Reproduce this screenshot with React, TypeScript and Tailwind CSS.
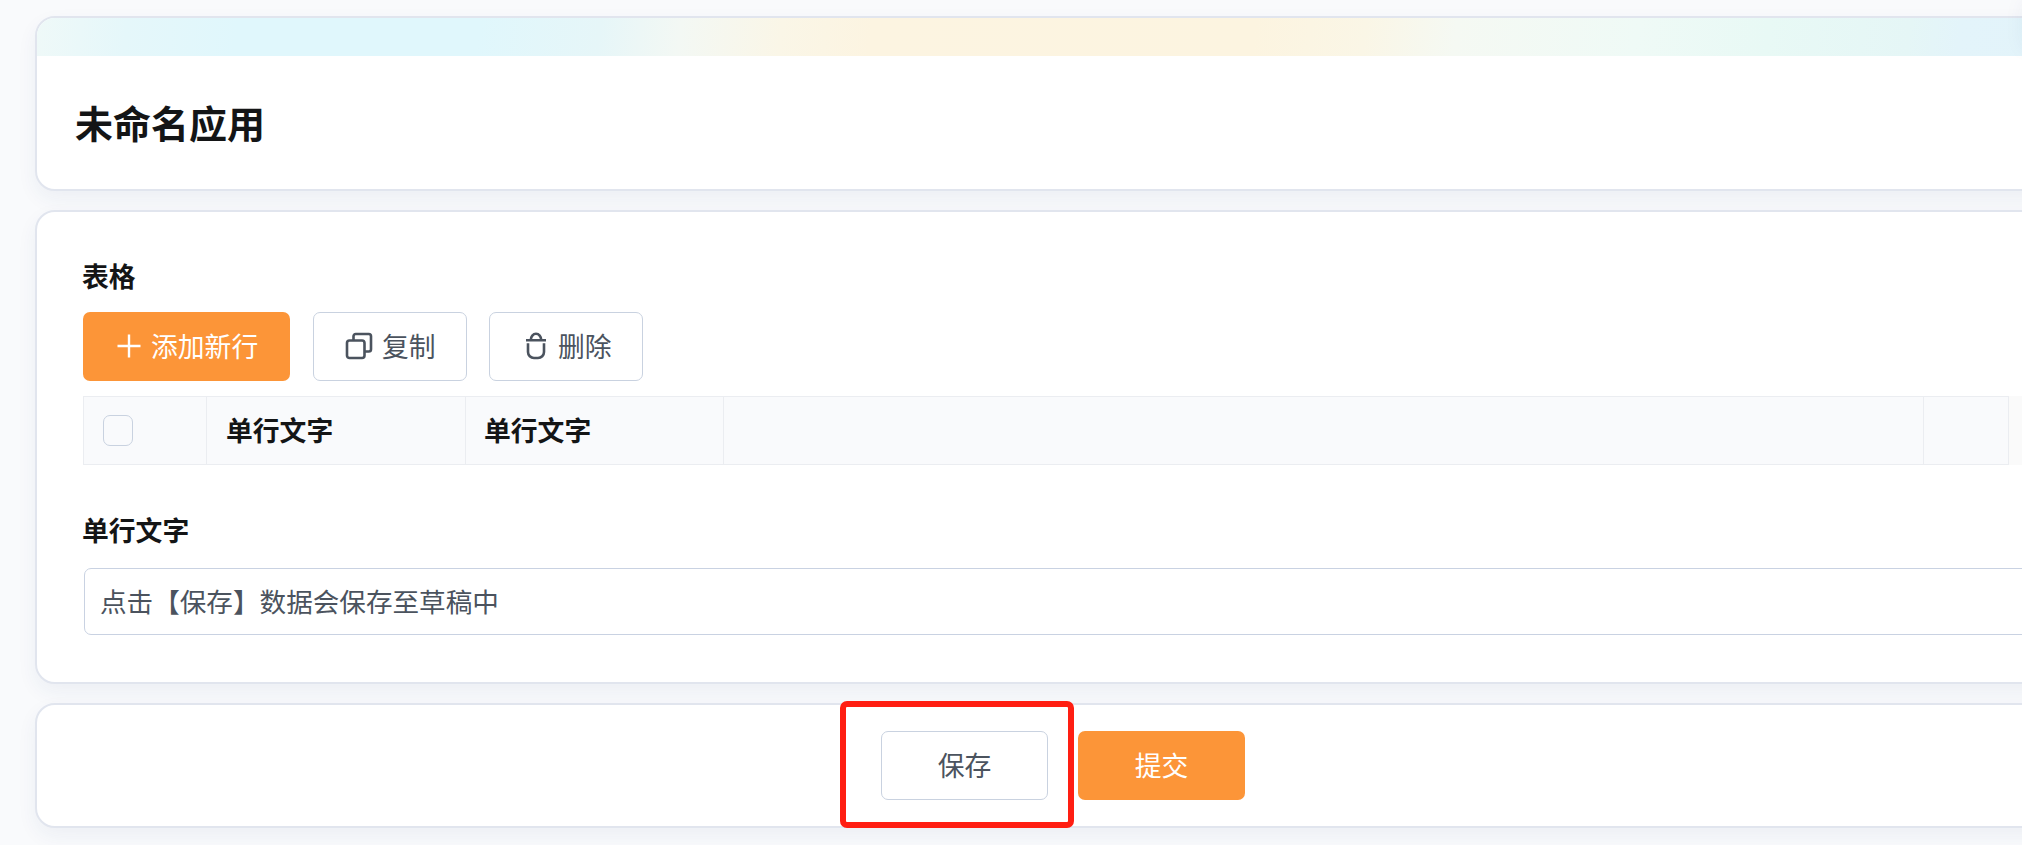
import React from "react";

const CARD =
  "shrink-0 w-[2056px] bg-white border-2 border-[#e1e5ee] rounded-[20px] shadow-[0_8px_20px_rgba(40,60,120,0.06)]";

const OUTLINE_BUTTON =
  "flex items-center h-[69px] bg-white border border-[#c9d2e0] rounded-[7px] text-[#4b535e]";

const PlusIcon: React.FC = () => (
  <svg className="mb-px" width="24" height="24" viewBox="0 0 24 24" fill="none" stroke="currentColor" strokeWidth="2.4">
    <path d="M12 .5v23M.5 12h23" />
  </svg>
);

const CopyIcon: React.FC = () => (
  <svg className="mb-0.5" width="28" height="28" viewBox="0 0 28 28" fill="none" stroke="currentColor" strokeWidth="2.6">
    <rect x="2" y="8.5" width="17.5" height="17.5" rx="2.5" />
    <path d="M8.5 8.5V4.2A2.2 2.2 0 0 1 10.7 2H23.8A2.2 2.2 0 0 1 26 4.2V17.3A2.2 2.2 0 0 1 23.8 19.5H19.5" />
  </svg>
);

const TrashIcon: React.FC = () => (
  <svg className="mb-0.5" width="20" height="28" viewBox="0 0 20 28" fill="none" stroke="currentColor" strokeWidth="2.6">
    <path d="M0 8.3H20M4.8 8a5.2 6.2 0 0 1 10.4 0M2 11.3V20A6 6 0 0 0 8 26H12A6 6 0 0 0 18 20V11.3" />
  </svg>
);

const App: React.FC = () => {
  return (
    <div className="relative w-full h-[845px] overflow-hidden bg-[#f9fafc] font-['Noto_Sans_CJK_SC',sans-serif] text-[26.8px] leading-[40px] text-[#141516]">
      <div className="flex flex-col gap-[19px] pt-4 pl-[35px]">
        {/* Header */}
        <header className={`${CARD} h-[175px] overflow-hidden`}>
          <div className="h-[38px] bg-[linear-gradient(97deg,#eff9f8_0px,#e5f7fa_90px,#e0f7fc_200px,#e0f7fc_440px,#e6f6f8_560px,#f3f8f4_640px,#faf6e7_740px,#fcf4e1_830px,#fcf4e0_1210px,#faf6e6_1320px,#f5f9f3_1410px,#effaf6_1590px,#e8f9f5_1720px,#e5f6f6_1860px,#e3f4fa_1910px,#e2f3fa_2056px)]" />
          <h1 className="pt-[38px] pl-[38px] text-[38px] leading-[56px] font-bold">未命名应用</h1>
        </header>

        {/* Form */}
        <main className={`${CARD} h-[474px] pt-[44px] pl-[46px]`}>
          <h2 className="-ml-px font-bold">表格</h2>

          <div className="flex mt-4">
            <button className="flex items-center gap-2.5 w-[207px] h-[69px] pl-[34px] rounded-[7px] bg-[#fc9538] text-white">
              <PlusIcon />
              <span className="pb-0.5">添加新行</span>
            </button>
            <button className={`${OUTLINE_BUTTON} ml-[23px] w-[154px] pl-[31px] gap-[9px]`}>
              <CopyIcon />
              <span className="pb-0.5">复制</span>
            </button>
            <button className={`${OUTLINE_BUTTON} ml-[22px] w-[154px] pl-[36px] gap-[12px]`}>
              <TrashIcon />
              <span className="pb-0.5">删除</span>
            </button>
          </div>

          {/* Table head */}
          <div className="flex mt-[15px] h-[69px] bg-[#fafafa]">
            <div className="flex w-[1926px] bg-[#f9fafc] border border-[#ebedf1] font-bold">
              <div className="flex items-center w-[123px] pl-[19px] border-r border-[#ebedf1]">
                <span className="w-[30px] h-[31px] rounded-[7px] border border-[#c9d2e0]" />
              </div>
              <div className="flex items-center w-[259px] pl-[19px] pb-0.5 border-r border-[#ebedf1]">单行文字</div>
              <div className="flex items-center w-[258px] pl-[18px] pb-0.5 border-r border-[#ebedf1]">单行文字</div>
              <div className="flex-1" />
              <div className="w-[85px] border-l border-[#ebedf1]" />
            </div>
          </div>

          <h2 className="mt-[45px] -ml-px font-bold">单行文字</h2>
          <div className="flex items-center mt-[18px] ml-px h-[67px] pl-[15px] pb-0.5 bg-white border border-[#c9d2e2] rounded-[7px] text-[26.6px] text-[#4b535e]">
            点击【保存】数据会保存至草稿中
          </div>
        </main>

        {/* Actions */}
        <footer className={`${CARD} flex items-center justify-center h-[125px]`}>
          <div className="relative">
            <button className={`${OUTLINE_BUTTON} justify-center w-[167px] pb-0.5`}>保存</button>
            <div className="absolute -left-[41px] -top-[30px] w-[234px] h-[127px] border-[6px] border-[#ff1e12] rounded-[7px]" />
          </div>
          <button className="flex items-center justify-center ml-[30px] w-[167px] h-[69px] pb-0.5 rounded-[7px] bg-[#fc9538] text-white">
            提交
          </button>
        </footer>
      </div>

      {/* Shadow of the panel next to the page */}
      <div className="absolute top-0 -right-5 w-5 h-[50px] shadow-[0_0_20px_rgba(40,60,120,0.05)]" />
    </div>
  );
};

export default App;
